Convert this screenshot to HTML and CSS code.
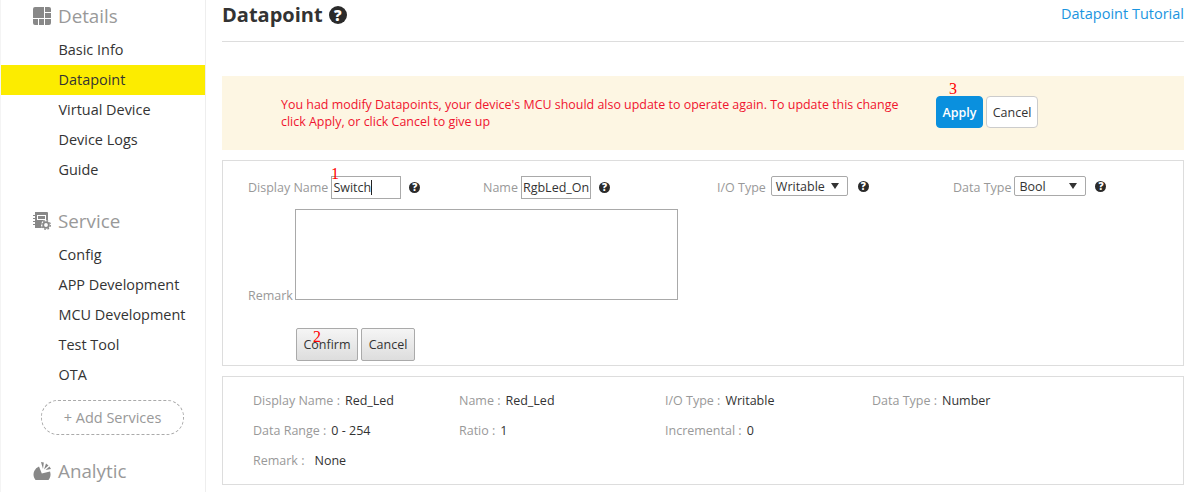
FILE: index.html
```html
<!DOCTYPE html>
<html lang="en">
  <head>
    <title>Datapoint</title>
    <meta charset="utf-8">
    <link rel="stylesheet" href="styles.css">
  </head>
  <body>
  <div class="page">
    <div class="sidebar">
      <div class="nav-head">
        <svg class="nav-icon" viewBox="0 0 18 18"><path d="M0 2a2 2 0 0 1 2-2h9v11H0zM12 0h4a2 2 0 0 1 2 2v3h-6zM12 6h6v5h-6zM0 12h5v6H2a2 2 0 0 1-2-2zM6 12h5v6H6zM12 12h6v4a2 2 0 0 1-2 2h-4z"/></svg>
        Details
      </div>
      <a class="nav-item">Basic Info</a>
      <a class="nav-item active">Datapoint</a>
      <a class="nav-item">Virtual Device</a>
      <a class="nav-item">Device Logs</a>
      <a class="nav-item">Guide</a>
      <div class="nav-head second">
        <svg class="nav-icon" viewBox="0 0 18 18">
          <path fill-rule="evenodd" d="M2 0h12a1 1 0 0 1 1 1v15H2zM4 3v5h9V3zM5 4h7v3H5z"/>
          <path d="M0 3h2v1H0zM0 6h2v1H0zM0 9h2v1H0zM0 12h2v1H0z"/>
          <circle cx="13" cy="13" r="5" fill="#fff"/>
          <circle cx="13" cy="13" r="2.800" fill="none" stroke="#888" stroke-width="1.800"/>
          <circle cx="13" cy="13" r="4.300" fill="none" stroke="#888" stroke-width="1.300" stroke-dasharray="1.700 1.680"/>
        </svg>
        Service
      </div>
      <a class="nav-item">Config</a>
      <a class="nav-item">APP Development</a>
      <a class="nav-item">MCU Development</a>
      <a class="nav-item">Test Tool</a>
      <a class="nav-item">OTA</a>
      <div class="add-service">+ Add Services</div>
      <div class="nav-head third">
        <svg class="nav-icon" viewBox="0 0 18 18"><path d="M6 4.500 8.800 11.500 17 9.500A8.500 8.500 0 1 1 6 4.500zM8 0l2.800.5-.8 6.500zM13 1.500l2.500 2-4.500 4zM12.500 8l4-3.500 1.500 2.500z"/></svg>
        Analytic
      </div>
    </div>

    <div class="main">
      <div class="title-bar">
        <h1>Datapoint <span class="help big">?</span></h1>
        <a class="tutorial">Datapoint Tutorial</a>
      </div>

      <div class="notice">
        <p>You had modify Datapoints, your device's MCU should also update to operate again. To update this change click Apply, or click Cancel to give up</p>
        <div class="notice-btns">
          <span class="mark mark3">3</span>
          <button class="btn primary">Apply</button>
          <button class="btn plain">Cancel</button>
        </div>
      </div>

      <div class="box edit-box">
        <div class="edit-row">
          <div class="field f1">
            <span class="mark mark1">1</span>
            <label>Display Name</label><span class="fake-input w70">Switch<i class="caret"></i></span><span class="help">?</span>
          </div>
          <div class="field f2">
            <label>Name</label><span class="fake-input w70">RgbLed_On</span><span class="help">?</span>
          </div>
          <div class="field f3">
            <label>I/O Type</label><span class="fake-select w77">Writable</span><span class="help">?</span>
          </div>
          <div class="field f4">
            <label>Data Type</label><span class="fake-select w72">Bool</span><span class="help">?</span>
          </div>
        </div>
        <div class="remark-row">
          <label>Remark</label>
          <div class="textarea"></div>
        </div>
        <div class="edit-btns">
          <span class="mark mark2">2</span>
          <button class="btn grey confirm">Confirm</button>
          <button class="btn grey cancel">Cancel</button>
        </div>
      </div>

      <div class="box info-box">
        <div><span class="key">Display Name :</span>Red_Led</div>
        <div><span class="key">Name :</span>Red_Led</div>
        <div><span class="key">I/O Type :</span>Writable</div>
        <div><span class="key">Data Type :</span>Number</div>
        <div><span class="key">Data Range :</span>0 - 254</div>
        <div><span class="key">Ratio :</span>1</div>
        <div><span class="key">Incremental :</span>0</div>
        <div></div>
        <div><span class="key wide">Remark :</span>None</div>
      </div>
    </div>
  </div>
  </body>
</html>
```

FILE: styles.css
```css
html {
  height: 100%;
}
body {
  margin: 0;
  padding: 0;
  background: #fff;
  color: #333;
  font-family: "Open Sans", "Noto Sans", sans-serif;
  font-size: 13px;
  overflow: hidden;
}

.page {
  display: flex;
  height: 492px;
}

/* sidebar */
.sidebar {
  width: 204px;
  margin-left: 1px;
  flex: none;
  border-right: 1px solid #eee;
  box-shadow: -1px 0 0 #f4f4f4;
}
.nav-head {
  display: flex;
  align-items: center;
  gap: 7px;
  height: 30px;
  margin-top: 2px;
  padding-left: 32px;
  font-size: 18.800px;
  color: #999;
}
.nav-head.second {
  margin-top: 21px;
  margin-bottom: 4px;
}
.nav-head.third {
  margin-top: 21px;
}
.nav-head:first-child {
  margin-top: 1px;
  margin-bottom: 4px;
}
.nav-icon {
  width: 18px;
  height: 18px;
  fill: #888;
  flex: none;
}
.nav-item {
  display: block;
  height: 30px;
  line-height: 29px;
  padding-left: 57.500px;
  font-size: 14.450px;
  color: #333;
}
.nav-item.active {
  background: #fcec00;
}
.add-service {
  width: 141px;
  height: 33px;
  line-height: 33px;
  margin: 10px 0 0 40px;
  border: 1px dashed #aaa;
  border-radius: 17px;
  text-align: center;
  font-size: 14.500px;
  color: #999;
}

/* main column */
.main {
  width: 962px;
  margin-left: 16px;
  flex: none;
}
.title-bar {
  display: flex;
  justify-content: space-between;
  height: 41px;
  border-bottom: 1px solid #ddd;
}
h1 {
  margin: 0;
  font-size: 20px;
  line-height: 30px;
  font-weight: 700;
}
.tutorial {
  font-size: 14.500px;
  line-height: 28px;
  color: #1b95e0;
}
.help {
  display: inline-block;
  width: 11px;
  height: 11px;
  line-height: 11px;
  margin-left: 8px;
  border-radius: 50%;
  background: #2b2b2b;
  color: #fff;
  font-size: 10px;
  font-weight: 800;
  text-align: center;
}
.help.big {
  width: 18px;
  height: 18px;
  line-height: 18px;
  margin-left: 1px;
  font-size: 15px;
  vertical-align: 1px;
}

.notice {
  display: flex;
  align-items: center;
  height: 74px;
  margin-top: 34px;
  padding-left: 59px;
  background: #fdf6e3;
}
.notice p {
  width: 640px;
  margin: 0;
  color: #f0142f;
  font-size: 12.450px;
  line-height: 17px;
}
.notice-btns {
  position: relative;
  display: flex;
  gap: 3px;
  margin: -2px 0 0 15px;
}
.btn {
  font-family: inherit;
  font-size: 12.500px;
  padding: 0;
  height: 32px;
}
.btn.primary {
  width: 47px;
  background: #0a90de;
  border: 1px solid #0a90de;
  border-radius: 4px;
  color: #fff;
  font-weight: 600;
}
.btn.plain {
  width: 52px;
  background: #fff;
  border: 1px solid #ccc;
  border-radius: 4px;
  color: #333;
}
.btn.grey {
  height: 33px;
  background: linear-gradient(#f5f5f5, #ddd);
  border: 1px solid #aaa;
  border-radius: 2px;
  color: #333;
}
.confirm {
  width: 62px;
}
.cancel {
  width: 54px;
}

.box {
  box-sizing: border-box;
  border: 1px solid #ddd;
  margin-top: 10px;
}
.edit-box {
  height: 206px;
  padding: 15px 0 0 25px;
}
.edit-row {
  display: flex;
  color: #999;
}
.field {
  position: relative;
  display: flex;
  align-items: center;
  height: 23px;
  font-size: 12.500px;
}
.field label {
  margin-right: 3px;
}
.f1 { width: 235px; }
.f2 { width: 234px; }
.f3 { width: 236px; }
.f3 label { margin-right: 5px; }
.fake-input,
.fake-select {
  position: relative;
  box-sizing: border-box;
  display: block;
  border: 1px solid #a9a9a9;
  color: #333;
  line-height: 21px;
  padding-left: 1px;
  font-size: 12.500px;
}
.fake-select {
  height: 20px;
  line-height: 19px;
  padding-left: 4px;
  border-radius: 2px;
  margin-top: -3px;
}
.fake-select::after {
  content: "";
  position: absolute;
  right: 8px;
  top: 6px;
  border: 4px solid transparent;
  border-top: 6px solid #333;
  border-bottom: 0;
}
.w70 { width: 70px; height: 23px; }
.w77 { width: 77px; }
.w72 { width: 72px; }
.caret {
  display: inline-block;
  width: 1px;
  height: 15px;
  background: #222;
  vertical-align: -3px;
}
.f3 .help, .f4 .help { margin-top: -3px; margin-left: 10px; }
.f4 .help { margin-left: 9px; }

.remark-row {
  display: flex;
  align-items: flex-end;
  margin-top: 10px;
  color: #999;
  font-size: 12.500px;
}
.remark-row label {
  width: 47px;
  line-height: 17px;
  margin-bottom: -4px;
}
.textarea {
  box-sizing: border-box;
  width: 383px;
  height: 91px;
  border: 1px solid #a9a9a9;
}
.edit-btns {
  position: relative;
  display: flex;
  gap: 3px;
  margin: 28px 0 0 48px;
}
.mark {
  position: absolute;
  z-index: 1;
  color: #f00;
  font-family: "Liberation Serif", serif;
  font-size: 16px;
  line-height: 16px;
  font-weight: 400;
}
.mark1 { left: 83px; top: -10px; }
.mark2 { left: 17px; top: 1px; }
.mark3 { left: 13px; top: -15px; }

.info-box {
  display: grid;
  grid-template-columns: 206px 206px 207px 1fr;
  grid-auto-rows: 30px;
  height: 109px;
  padding: 9px 0 0 30px;
  font-size: 12.500px;
  line-height: 30px;
  color: #333;
}
.key {
  color: #999;
  margin-right: 5px;
}
.key.wide {
  margin-right: 10px;
}
```
